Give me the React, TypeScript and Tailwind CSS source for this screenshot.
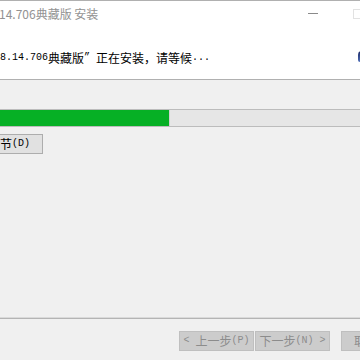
import React from "react";

// SimSun-like run: CJK at 12px, ASCII in a 6px-wide mono
function Sim({ t }: { t: string }) {
  const parts = t.split(/([\x20-\x7e”]+)/);
  return (
    <>
      {parts.map((p, i) =>
        p === "" ? null : /^[\x20-\x7e”]+$/.test(p) ? (
          <span
            key={i}
            className="font-['Liberation_Mono',monospace] text-[10px] whitespace-pre"
          >
            {p}
          </span>
        ) : (
          <span key={i} className="font-['Noto_Sans_CJK_SC',sans-serif] text-[12px]">
            {p}
          </span>
        )
      )}
    </>
  );
}

function WinButton({ label }: { label: string }) {
  return (
    <div className="w-[75px] h-[20px] shrink-0 flex items-center justify-center border border-[#bfbfbf] bg-[#cccccc] text-[#8c8c8c] leading-[12px]">
      <Sim t={label} />
    </div>
  );
}

export default function App() {
  return (
    <div className="w-[360px] h-[360px] bg-[#f0f0f0] overflow-hidden relative font-['Noto_Sans_CJK_SC',sans-serif]">
      <div className="h-[80px] bg-white border-t border-b border-[#b0b0b0] relative">
        <div className="flex items-center h-[12px] mt-[7px]">
          <span className="text-[12px] leading-[12px] text-[#929292] ml-[-1px] whitespace-pre">
            14.706典藏版 安装
          </span>
          <div className="flex-1" />
          <div className="w-[10px] h-px bg-[#8a8a8a] mr-[35px] mt-[-2px]" />
          <div className="w-[10px] h-[10px] border border-[#e2e2e2] mr-[-3px]" />
        </div>
        <div className="mt-[32px] h-[12px] leading-[12px] text-black whitespace-pre flex items-center">
          <Sim t="8.14.706典藏版” 正在安装，请等候..." />
        </div>
        <div className="absolute left-[358px] top-[50px] w-[6px] h-[11px] rounded-tl-[4px] rounded-bl-[2px] bg-gradient-to-b from-[#1c2a66] to-[#4f6fb8]" />
      </div>

      <div className="mt-[29px] h-[18px] border-y border-[#bcbcbc] bg-[#e6e6e6] flex">
        <div className="w-[170px] h-full bg-[#06b025] border-r border-[#d2d2d2]" />
      </div>

      <div className="mt-[7px] ml-[-25px] w-[68px] h-[20px] border border-[#adadad] bg-[#e1e1e1] text-black flex items-center justify-center leading-[12px]">
        <Sim t="细节(D)" />
      </div>

      <div className="mt-[163px] h-[2px] border-t border-[#dadada] border-b border-b-[#b4b4b4]" />

      <div className="mt-[12px] flex pl-[179px]">
        <WinButton label="< 上一步(P)" />
        <div className="w-px shrink-0" />
        <WinButton label="下一步(N) >" />
        <div className="w-[11px] shrink-0" />
        <div className="w-[75px] h-[20px] shrink-0 flex items-center pl-[12px] border border-[#bfbfbf] bg-[#cccccc] text-[#8c8c8c] leading-[12px]">
          <Sim t="取消(C)" />
        </div>
      </div>
    </div>
  );
}
